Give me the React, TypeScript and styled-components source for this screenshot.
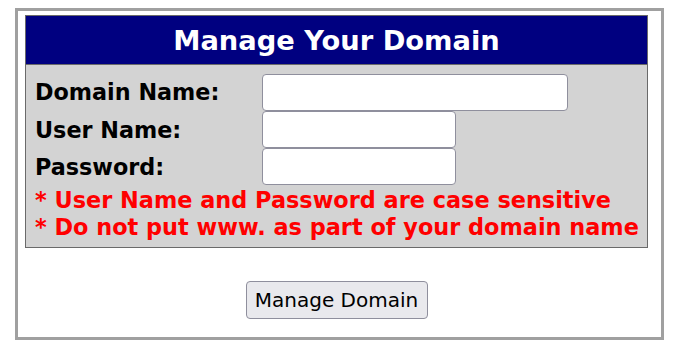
import React from "react";
import styled, { createGlobalStyle } from "styled-components";

const Global = createGlobalStyle`
  html, body { margin: 0; padding: 0; background: #ffffff; }
  body { font-family: "DejaVu Sans", Verdana, sans-serif; }
`;

const Frame = styled.div`
  box-sizing: border-box;
  margin: 8px 0 0 15px;
  width: 649px;
  height: 332px;
  border: 3px solid #a0a0a0;
  padding: 4px 13px 0 7px;
  display: flex;
  flex-direction: column;
`;

const Panel = styled.div`
  border: 1px solid #6a6a6a;
  background: #d3d3d3;
  display: flex;
  flex-direction: column;
`;

const Header = styled.div`
  background: #000080;
  color: #ffffff;
  font-weight: bold;
  font-size: 27.3px;
  height: 48px;
  display: flex;
  align-items: center;
  justify-content: center;
  border-bottom: 1px solid #6a6a6a;
`;

const Body = styled.div`
  padding: 8px 0 6px 9px;
  display: flex;
  flex-direction: column;
`;

const Row = styled.div`
  display: grid;
  grid-template-columns: 227px 1fr;
  align-items: center;
  height: 37px;
  &:first-child { height: 38px; }
`;

const Label = styled.label`
  font-weight: bold;
  font-size: 22.3px;
  color: #000000;
`;

const Input = styled.input<{ $w: number }>`
  box-sizing: border-box;
  width: ${(p) => p.$w}px;
  height: 37px;
  border: 1px solid #8f8f9d;
  border-radius: 4px;
  background: #ffffff;
  margin: 0;
  padding: 0 6px;
  font-size: 18px;
  font-family: "DejaVu Sans", sans-serif;
`;

const Note = styled.div`
  color: #ff0000;
  font-weight: bold;
  font-size: 22.4px;
  line-height: 27px;
  white-space: nowrap;
`;

const Notes = styled.div`
  margin-top: 2px;
  display: flex;
  flex-direction: column;
`;

const Actions = styled.div`
  display: flex;
  justify-content: center;
  padding-top: 33px;
`;

const Button = styled.button`
  box-sizing: border-box;
  height: 38px;
  width: 182px;
  border: 1px solid #8f8f9d;
  border-radius: 4px;
  background: #e9e9ed;
  color: #000000;
  font-family: "DejaVu Sans", Verdana, sans-serif;
  font-size: 20px;
  padding: 0;
`;

export default function App() {
  return (
    <>
      <Global />
      <Frame>
        <Panel>
          <Header>Manage Your Domain</Header>
          <Body>
            <div>
              <Row>
                <Label>Domain Name:</Label>
                <Input $w={306} type="text" />
              </Row>
              <Row>
                <Label>User Name:</Label>
                <Input $w={194} type="text" />
              </Row>
              <Row>
                <Label>Password:</Label>
                <Input $w={194} type="password" />
              </Row>
            </div>
            <Notes>
              <Note>* User Name and Password are case sensitive</Note>
              <Note>* Do not put www. as part of your domain name</Note>
            </Notes>
          </Body>
        </Panel>
        <Actions>
          <Button>Manage Domain</Button>
        </Actions>
      </Frame>
    </>
  );
}
